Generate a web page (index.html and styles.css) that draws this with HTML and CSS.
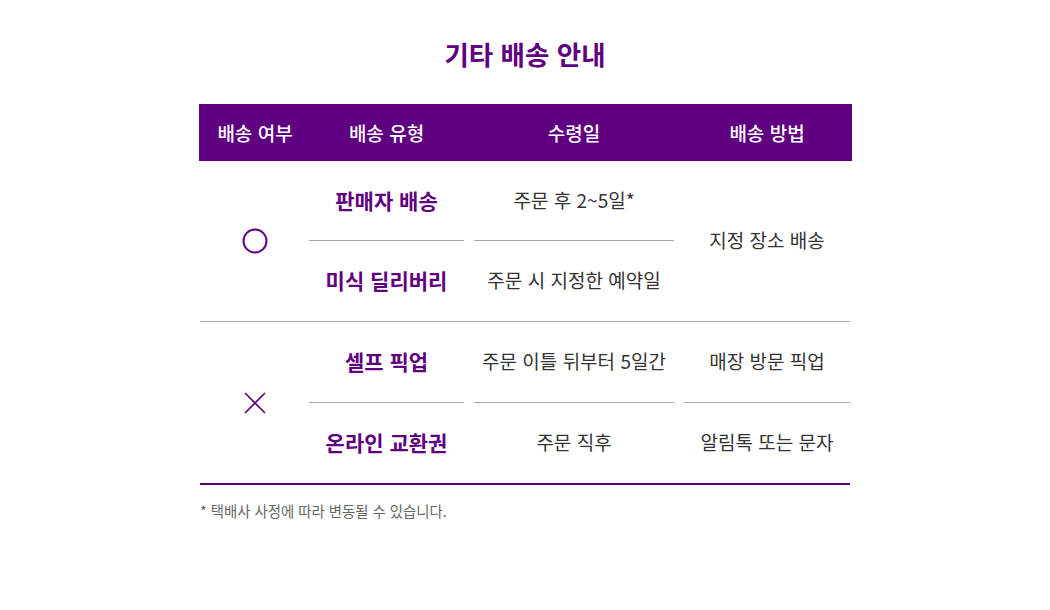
FILE: index.html
```html
<!DOCTYPE html>
<html lang="ko">
<head>
<meta charset="utf-8">
<link rel="stylesheet" href="styles.css">
</head>
<body>
<div class="page">
  <h2 class="title">기타 배송 안내</h2>
  <div class="wrap">
    <div class="head">
      <div class="hcell c1">배송 여부</div>
      <div class="hcell">배송 유형</div>
      <div class="hcell">수령일</div>
      <div class="hcell">배송 방법</div>
    </div>

    <div class="group g1">
      <div class="cell c1 span2">
        <svg width="26" height="26" viewBox="0 0 26 26"><circle cx="13" cy="13" r="11.5" fill="none" stroke="#5f0080" stroke-width="2"/></svg>
      </div>
      <div class="cell type line">판매자 배송</div>
      <div class="cell line">주문 후 2~5일*</div>
      <div class="cell span2">지정 장소 배송</div>
      <div class="cell type">미식 딜리버리</div>
      <div class="cell">주문 시 지정한 예약일</div>
    </div>

    <div class="group g2">
      <div class="cell c1 span2">
        <svg width="22" height="22" viewBox="0 0 22 22"><path d="M1 1 L21 21 M21 1 L1 21" fill="none" stroke="#5f0080" stroke-width="1.6"/></svg>
      </div>
      <div class="cell type line">셀프 픽업</div>
      <div class="cell line">주문 이틀 뒤부터 5일간</div>
      <div class="cell line">매장 방문 픽업</div>
      <div class="cell type">온라인 교환권</div>
      <div class="cell">주문 직후</div>
      <div class="cell">알림톡 또는 문자</div>
    </div>

    <p class="note">* 택배사 사정에 따라 변동될 수 있습니다.</p>
  </div>
</div>
</body>
</html>
```

FILE: styles.css
```css
* { box-sizing: border-box; }
html, body { margin: 0; padding: 0; background: #fff; }
body {
  font-family: "Noto Sans CJK KR", "Noto Sans", sans-serif;
  color: #333;
}
.page {
  width: 1050px;
  padding-top: 36px;
}
.title {
  margin: 0 0 32px;
  text-align: center;
  font-size: 26.5px;
  line-height: 36px;
  font-weight: 700;
  color: #5f0080;
}
.wrap {
  width: 653px;
  margin-left: 199px;
}
.head {
  height: 57px;
  background: #5f0080;
  padding: 0 2px 0 1px;
  display: grid;
  grid-template-columns: 99px 155px 200px 166px;
  column-gap: 10px;
  align-items: center;
}
.hcell {
  text-align: center;
  color: #fff;
  font-size: 19px;
  font-weight: 500;
  line-height: 26px;
}
.c1 { padding-left: 11px; }
.group {
  margin: 0 2px 0 1px;
  display: grid;
  grid-template-columns: 99px 155px 200px 166px;
  column-gap: 10px;
}
.g1 {
  grid-template-rows: 80px 80px;
  border-bottom: 1px solid #a8a8a8;
}
.g2 {
  grid-template-rows: 81px 80px;
  border-bottom: 2px solid #5f0080;
}
.cell {
  display: flex;
  align-items: center;
  justify-content: center;
  padding-bottom: 2px;
  font-size: 19px;
  line-height: 26px;
  color: #333;
}
.cell.c1 { padding-bottom: 0; }
.cell svg { display: block; }
.span2 { grid-row: span 2; }
.line { border-bottom: 1px solid #a8a8a8; }
.type {
  color: #5f0080;
  font-weight: 700;
  font-size: 21px;
}
.note {
  margin: 16px 0 0 1px;
  font-size: 14.4px;
  line-height: 20px;
  color: #666;
}
```
